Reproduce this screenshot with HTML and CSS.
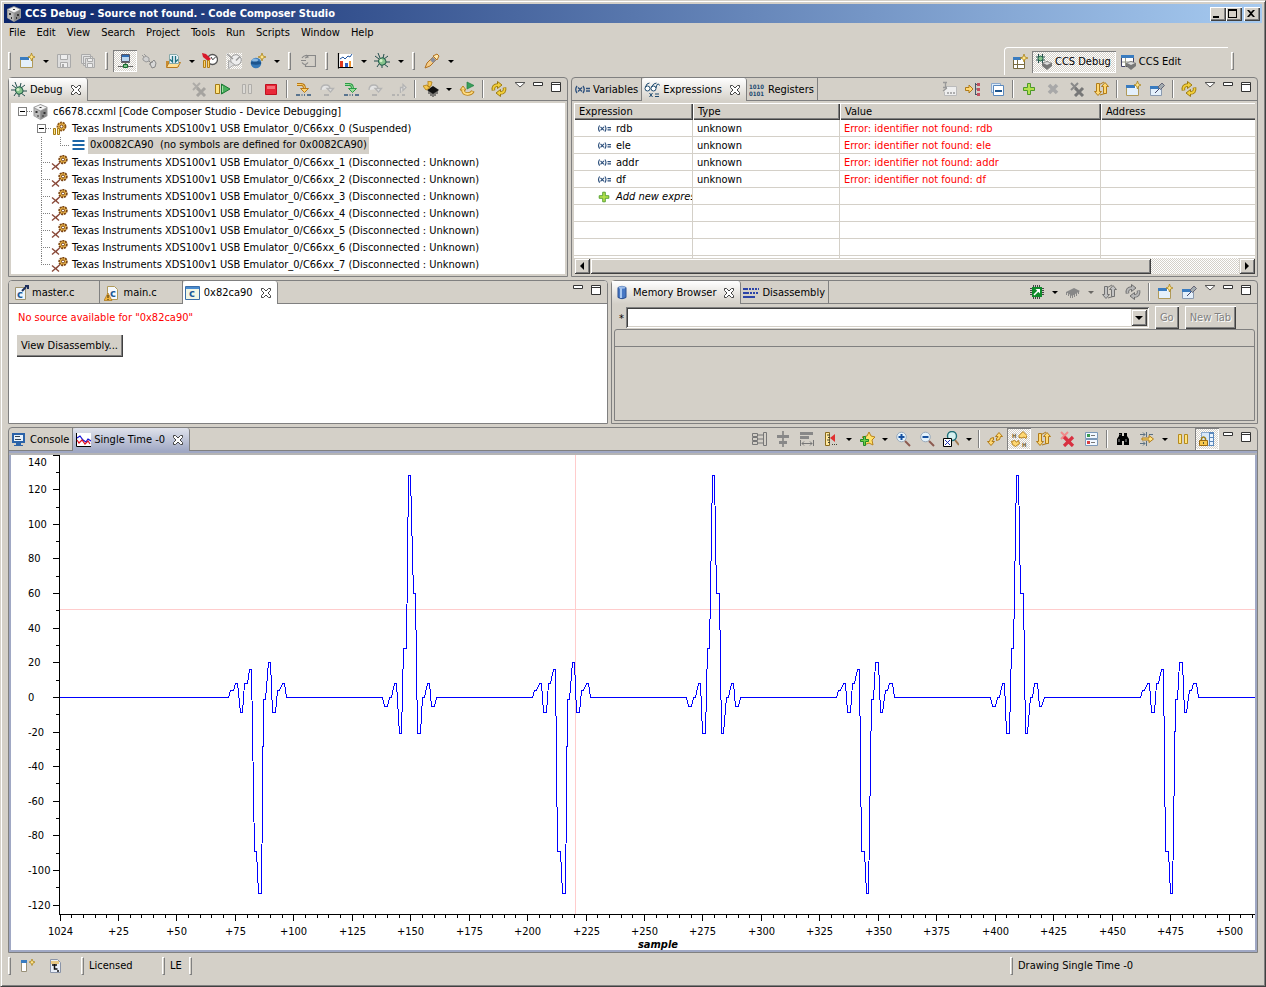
FILE: index.html
```html
<!DOCTYPE html>
<html lang="en">
<head>
  <meta charset="UTF-8">
  <meta name="viewport" content="width=device-width, initial-scale=1.0">
  <title>CCS Debug - Source not found. - Code Composer Studio</title>
  <link rel="stylesheet" href="styles.css">
</head>
<body>

  <!-- icon set -->
  <svg class="sprite" aria-hidden="true">
    <symbol id="cube" viewBox="0 0 16 16">
      <path d="M8 0l7 3v9l-7 4-7-4V3z" fill="#999"/>
      <path d="M8 1l6 2.500-6 3-6-3z" fill="#f2f2f2"/>
      <path d="M2 4.500l5.500 3V15L2 12z" fill="#bbb"/>
      <path d="M14 4.500l-5.500 3V15l5.500-3z" fill="#888"/>
      <path d="M7 3h2v1H7zM3 7h2v2H3zM5 11h1v2H5zM11 8h2v2h-2zM10 11h1v2h-1z" fill="#333"/>
    </symbol>
    <symbol id="window-new" viewBox="0 0 16 16">
      <path d="M1.500 4.500h12v10h-12z" fill="#fff" stroke="#b09a5a"/>
      <path d="M1 4h9v3H1z" fill="#3a7cc0"/>
      <path d="M2 7h11v7H2z" fill="#e4f0fb"/>
      <path d="M12.500 0l1 3 2.500 1-2.500 1-1 3-1-3L9 4l2.500-1z" fill="#ffe58a" stroke="#a67c10" stroke-width=".7"/>
    </symbol>
    <symbol id="save" viewBox="0 0 16 16">
      <path d="M1.500 1.500h13v13h-13z" fill="#ddd" stroke="#aaa"/>
      <path d="M4.500 1.500h7v5h-7zM4.500 9.500h7v5h-7z" fill="#eee" stroke="#aaa"/>
      <path d="M6 11h2v3H6z" fill="#aaa"/>
    </symbol>
    <symbol id="save-all" viewBox="0 0 16 16">
      <path d="M1.500 1.500h9v9h-9zM3.500 3.500h9v9h-9z" fill="#e2e2e2" stroke="#aaa"/>
      <path d="M5.500 5.500h9v9h-9z" fill="#ddd" stroke="#aaa"/>
      <path d="M7.500 5.500h5v3h-5zM7.500 10.500h5v4h-5z" fill="#eee" stroke="#aaa"/>
    </symbol>
    <symbol id="target" viewBox="0 0 16 16">
      <path d="M4.500 1.500h8v7h-8z" fill="#bcd7f0" stroke="#556"/>
      <path d="M5 2h7v2H5z" fill="#2f6db5"/>
      <path d="M8 9h1v3H8zM1 13h5v1H1zM11 13h5v1h-5zM4 9h9v1H4z" fill="#666"/>
      <path d="M6.500 11.500h4v3h-4z" fill="#7fc08a" stroke="#156b2c"/>
    </symbol>
    <symbol id="plugs" viewBox="0 0 16 16">
      <path d="M1 2l2 2M3 1l2 2M2 5l3-2 3 2v3l-3 1-3-2z" fill="#d0d0d0" stroke="#999"/>
      <path d="M8 8l2 2M9 11l4-4 2 3-1 4-3 1zM8 11h2M11 8v2" fill="#d8d8d8" stroke="#888"/>
    </symbol>
    <symbol id="load" viewBox="0 0 16 16">
      <path d="M1 8h3l1 1h9v5H1z" fill="#c88c30"/>
      <path d="M1.500 14.500L4 9.500h11.500l-3 5z" fill="#ffdf95" stroke="#b87a20"/>
      <path d="M4.500 1.500h7l2 2v7h-9z" fill="#e8f2f8" stroke="#8aa"/>
      <path d="M7.500 3v6L5 6.500M10.500 3v6L13 6.500" fill="none" stroke="#1d7080" stroke-width="1.300"/>
    </symbol>
    <symbol id="clock" viewBox="0 0 16 16">
      <circle cx="10.500" cy="6.500" r="5" fill="#fff" stroke="#555" stroke-width="1.300"/>
      <path d="M10.500 7l3-3M10.500 6.500L9 4" stroke="#333"/>
      <path d="M0 0l4 1 5 5-3 2-5-4z" fill="#d8192a"/>
      <path d="M1.500 7.500h2v7h-2zM5.500 7.500h2v7h-2z" fill="#ffd36a" stroke="#b17d16"/>
    </symbol>
    <symbol id="clock-off" viewBox="0 0 16 16">
      <circle cx="10" cy="7" r="5.300" fill="#eee" stroke="#999"/>
      <path d="M10 7.500l4-4M1 1l6 5" stroke="#999" stroke-width="1.500"/>
      <path d="M2.500 7.500l6 4-6 4z" fill="#ddd" stroke="#aaa"/>
    </symbol>
    <symbol id="ball" viewBox="0 0 16 16">
      <circle cx="6" cy="10" r="5.300" fill="#3679b8"/>
      <path d="M1 9q5-2 10 0v2q-5 1.500-10 0z" fill="#1d558e"/>
      <ellipse cx="5" cy="7" rx="3" ry="1.500" fill="#86b6e2"/>
      <path d="M12 0l1 3 3 1-3 1-1 3-1-3-3-1 3-1z" fill="#ffe58a" stroke="#a67c10" stroke-width=".7"/>
    </symbol>
    <symbol id="reload-box" viewBox="0 0 16 16">
      <path d="M6 2.500h9.500v11H5.500V12M2 5q3-4 6-1M8 9.500q-3 4-6 0M1 7.500h5M6 2l2 2-3 1" fill="none" stroke="#888" stroke-width="1.200"/>
    </symbol>
    <symbol id="graph" viewBox="0 0 16 16">
      <path d="M1 1h15v14H1z" fill="#fff"/>
      <path d="M1.500 0v15.500M1 14.500h15" stroke="#000" stroke-width="1.200"/>
      <path d="M3 6l3-2 2 2 3-3 2 1 2-3" fill="none" stroke="#1c53a0"/>
      <path d="M3 8h3v6H3z" fill="#e03a20"/><path d="M8 10h3v4H8z" fill="#2c62c8"/><path d="M12 8h2v6h-2z" fill="#f0922c"/>
    </symbol>
    <symbol id="bug" viewBox="0 0 16 16">
      <path d="M1 3l4 3M0 8h5M3 14l2-3M4 0l2 5M10 1L9 5M14 3l-4 3M16 9h-5M14 14l-4-3M8 15v-4" stroke="#234d4d"/>
      <ellipse cx="8" cy="8.500" rx="3.600" ry="3.600" transform="rotate(-30 8 8)" fill="#86c48d" stroke="#235f4a"/>
      <circle cx="7" cy="7.500" r="1.500" fill="#d6f2c8"/>
    </symbol>
    <symbol id="torch" viewBox="0 0 16 16">
      <path d="M1 15l2-5 7-7 3 3-7 7z" fill="#f6cd88" stroke="#b07020"/>
      <path d="M6 7l3 3 3-3-3-3z" fill="#8a8f9e"/>
      <path d="M9 3l4-2 2 2-2 4z" fill="#ffe9ae" stroke="#b07020"/>
    </symbol>
    <symbol id="xx" viewBox="0 0 16 16">
      <path d="M2 2l7 7M9 2L2 9" stroke="#8a8a8a" stroke-width="2"/>
      <path d="M6 7l8 8M14 7l-8 8" stroke="#777" stroke-width="3"/>
    </symbol>
    <symbol id="resume" viewBox="0 0 16 16">
      <path d="M.500 3.500h4v9h-4z" fill="#ffe37e" stroke="#a37a16"/>
      <path d="M6.500 3l8.500 5-8.500 5z" fill="#48b05c" stroke="#1b7734"/>
      <path d="M7.500 5v6" stroke="#a6dda4"/>
    </symbol>
    <symbol id="pause" viewBox="0 0 16 16">
      <path d="M3.500 3.500h3v9h-3zM9.500 3.500h3v9h-3z" fill="#ffe37e" stroke="#b58a1c"/>
    </symbol>
    <symbol id="stop" viewBox="0 0 16 16">
      <path d="M2.500 3.500h11v10h-11z" fill="#e82838" stroke="#c01020"/>
      <path d="M4 5h8v3H4z" fill="#f47078"/>
    </symbol>
    <symbol id="step-in" viewBox="0 0 16 16">
      <path d="M2 3.500h4.500q3 0 3 4.500" fill="none" stroke="#b8791a" stroke-width="3"/>
      <path d="M2 3.500h4.500q3 0 3 4.500" fill="none" stroke="#ffd36a"/>
      <path d="M5.500 7.500h8l-4 4z" fill="#ffd36a" stroke="#b8791a"/>
      <path d="M1 14h4M12 14h4M6.500 14h1M9 14h1" stroke="#31557c" stroke-width="1.600"/>
    </symbol>
    <symbol id="step-in-green" viewBox="0 0 16 16">
      <path d="M2 3.500h4.500q3 0 3 4.500" fill="none" stroke="#2b9c46" stroke-width="3"/>
      <path d="M2 3.500h4.500q3 0 3 4.500" fill="none" stroke="#9adf9a"/>
      <path d="M5.500 7.500h8l-4 4z" fill="#9adf9a" stroke="#2b9c46"/>
      <path d="M1 14h4M12 14h4M6.500 14h1M9 14h1" stroke="#31557c" stroke-width="1.600"/>
    </symbol>
    <symbol id="step-over" viewBox="0 0 16 16">
      <path d="M2 9q0-5 5-5 4 0 4 4M8 7.500h6.500l-3 3.500z" fill="#e4e4e4" stroke="#b4b4b4" stroke-width="1.300"/>
      <path d="M5 14h5" stroke="#aaa" stroke-width="1.600"/>
    </symbol>
    <symbol id="step-out" viewBox="0 0 16 16">
      <path d="M9.500 12V6.500h2.500M12 3.500l3 3-3 3z" fill="#e4e4e4" stroke="#b4b4b4" stroke-width="1.300"/>
      <path d="M1 14h3M6 14h2M11 14h3" stroke="#aaa" stroke-width="1.600"/>
    </symbol>
    <symbol id="chip-reset" viewBox="0 0 16 16">
      <path d="M4 9l6-4 6 4-6 4z" fill="#111"/>
      <path d="M6 10v3M8 11v4M10 12v4M12 11v4M14 10v3" stroke="#222"/>
      <path d="M5 0l4 1-1 4-3 1zM0 5l4-1 3 3-4 2z" fill="#f7c84e" stroke="#ad7b14" stroke-width=".8"/>
    </symbol>
    <symbol id="restart" viewBox="0 0 16 16">
      <path d="M8 1l7 3.500L8 8z" fill="#3aa05c" stroke="#1f7c3e" stroke-width=".7"/>
      <path d="M4 9q0 4 4.500 4 4 0 5.500-3" fill="none" stroke="#b8831c" stroke-width="3.600"/>
      <path d="M1 9l3-4 3 4z" fill="#ffdc80" stroke="#b8831c"/>
      <path d="M4 8.500q0 4.500 4.500 4.500 4 0 5-2.500" fill="none" stroke="#ffdc80" stroke-width="1.800"/>
    </symbol>
    <symbol id="cycle" viewBox="0 0 16 16">
      <path d="M2.500 9.500Q1.500 4 7 4M13.500 6.500Q14.500 12 9 12" fill="none" stroke="#9c7a10" stroke-width="3.600"/>
      <path d="M6.500 .500L11 4 6.500 7.500zM9.500 8.500L5 12l4.500 3.500z" fill="#f2cf3c" stroke="#9c7a10"/>
      <path d="M2.500 9Q1.500 4 7.500 4M13.500 7Q14.500 12 8.500 12" fill="none" stroke="#f2cf3c" stroke-width="1.800"/>
    </symbol>
    <symbol id="swap" viewBox="0 0 16 16">
      <path d="M3.500 2.500h3v8h2L5 14.500 1.500 10.500h2zM10.500 12.500v-7h-2L12 1.500l3.500 4h-2v7z" fill="#ffd873" stroke="#b07b18"/>
      <path d="M6.500 3.500L11 1M7 14l5-1.500" stroke="#b07b18"/>
    </symbol>
    <symbol id="sync" viewBox="0 0 16 16">
      <path d="M8.500 5.500l3.500-4 3.500 4h-2q0 4-4 4v-2.500q1.500 0 1.500-1.500z" fill="#ffd873" stroke="#b07b18"/>
      <path d="M7.500 10.500L4 14.500l-3.500-4h2q0-4 4-4V9Q5 9 5 10.500z" fill="#ffd873" stroke="#b07b18"/>
    </symbol>
    <symbol id="sync-h" viewBox="0 0 16 16">
      <path d="M8 4.500L12 .500l4 4-1 3-2-1.500-2 1-3-.5zM.500 10.500l3-1 2 1.500 2-1.500 1 3-4 3-3-2z" fill="#ffd873" stroke="#b07b18"/>
      <text x="1" y="7" class="glyph" fill="#7d6a3a">H</text>
      <text x="11" y="16" class="glyph" fill="#7d6a3a">H</text>
    </symbol>
    <symbol id="view-menu" viewBox="0 0 16 16">
      <path d="M3 1.500h10L8 6z" fill="#fff" stroke="#555"/>
    </symbol>
    <symbol id="minimize" viewBox="0 0 16 16">
      <path d="M3.500 1.500h9v3h-9z" fill="#fff" stroke="#333"/>
    </symbol>
    <symbol id="maximize" viewBox="0 0 16 16">
      <path d="M3.500 1.500h9v9h-9zM3 3.500h10" fill="#fff" stroke="#333"/>
    </symbol>
    <symbol id="close" viewBox="0 0 12 12">
      <path d="M1.500 1.500h2L6 4l2.500-2.500h2v2L8 6l2.500 2.500v2h-2L6 8l-2.500 2.500h-2v-2L4 6 1.500 3.500z" fill="#fff" stroke="#444"/>
    </symbol>
    <symbol id="gear-pause" viewBox="0 0 17 16">
      <circle cx="10.500" cy="5.500" r="4" fill="#f2bd4c" stroke="#8a5418" stroke-width="1.800" stroke-dasharray="2 .800"/>
      <circle cx="10.500" cy="5.500" r="1.500" fill="#fff" stroke="#6f3a10"/>
      <path d="M2.500 7.500h2v6h-2zM6.500 7.500h2v6h-2z" fill="#ffe37e" stroke="#a37a16"/>
    </symbol>
    <symbol id="gear-x" viewBox="0 0 17 16">
      <circle cx="12" cy="4.500" r="3.800" fill="#f2bd4c" stroke="#7a4414" stroke-width="1.800" stroke-dasharray="2 .800"/>
      <circle cx="12" cy="4.500" r="1.500" fill="#fff" stroke="#6f3a10"/>
      <path d="M1 8.500l7 6M8 8.500l-7 6M5 11.500l4-4" stroke="#8a4a3a" stroke-width="1.400"/>
    </symbol>
    <symbol id="frame" viewBox="0 0 16 16">
      <path d="M2 2h12v2H2zM2 6h12v2H2zM2 10h12v2H2z" fill="#1c66a8"/>
    </symbol>
    <symbol id="var" viewBox="0 0 16 16">
      <path d="M3 4Q.500 7.500 3 11M9 4q2.500 3.500 0 7M4 5.500l4 4M8 5.500l-4 4M12 6.500h4M12 9h4" fill="none" stroke="#2c4f7c" stroke-width="1.300"/>
    </symbol>
    <symbol id="glasses" viewBox="0 0 16 16">
      <circle cx="3.500" cy="6.500" r="2.500" fill="#fff" stroke="#1e4b70"/>
      <circle cx="9.500" cy="6.500" r="2.500" fill="#fff" stroke="#1e4b70"/>
      <path d="M1.500 5q1-4 4-4M7.500 5q2-4 5-4M12 6l1-3.500q2-1.500 2.500 1M5.500 11l3 4M8.500 11l-3 4M11 12h4M11 14.500h4" fill="none" stroke="#1e4b70"/>
    </symbol>
    <symbol id="registers" viewBox="0 0 16 16">
      <text x="0" y="7" class="glyph" fill="#1e4b70">1010</text>
      <text x="0" y="14" class="glyph" fill="#1e4b70">0101</text>
    </symbol>
    <symbol id="plus" viewBox="0 0 16 16">
      <path d="M6.500 2.500h3v4h4v3h-4v4h-3v-4h-4v-3h4z" fill="#b4e04c" stroke="#4c9a28"/>
    </symbol>
    <symbol id="x-off" viewBox="0 0 16 16">
      <path d="M4 4l8 8M12 4l-8 8" stroke="#a8a8a8" stroke-width="3.600"/>
    </symbol>
    <symbol id="type-names" viewBox="0 0 16 16">
      <path d="M5 5.500h10.500v9H3.500V11" fill="#eee" stroke="#bbb"/>
      <path d="M2 1.500h4M4.500 2v5M2 6.500h4M2 10l4-3M6 12h2M9 12h2M12 12h2" stroke="#999" stroke-width="1.300"/>
    </symbol>
    <symbol id="tree-arrow" viewBox="0 0 16 16">
      <path d="M.500 6.500H4V4l4 4-4 4V9.500H.500z" fill="#ffd873" stroke="#b07b18"/>
      <path d="M10.500 2v12M10 3.500h3M10 8h3M10 13.500h3" stroke="#456" fill="none"/>
      <path d="M12 2h3v3h-3zM12 7h3v3h-3zM12 12h3v3h-3z" fill="#c05060"/>
    </symbol>
    <symbol id="collapse" viewBox="0 0 16 16">
      <path d="M2.500 2.500h9v9h-9z" fill="#dcecfb" stroke="#8aa8cc"/>
      <path d="M4.500 4.500h10v10h-10z" fill="#fff" stroke="#5a88bc"/>
      <path d="M6 9h7v2H6z" fill="#1d558e"/>
    </symbol>
    <symbol id="window-pin" viewBox="0 0 16 16">
      <path d="M1.500 5.500h11v9h-11z" fill="#e4f0fb" stroke="#8a9ab0"/>
      <path d="M1 5h9v3H1z" fill="#3a7cc0"/>
      <path d="M6 12l4-4" stroke="#446"/>
      <path d="M9 6l4-4 2.500 2.500-4 4z" fill="#a4acb0" stroke="#667"/>
    </symbol>
    <symbol id="chip-green" viewBox="0 0 16 16">
      <path d="M4.500 1v14M6.500 1v14M8.500 1v14M10.500 1v14M1 4.500h14M1 6.500h14M1 8.500h14M1 10.500h14" stroke="#444"/>
      <path d="M3 3h10v10H3z" fill="#0f8a2a"/>
      <path d="M5 11l5-5" stroke="#fff" stroke-width="1.600"/>
      <path d="M6.500 5H11v4.500z" fill="#fff"/>
    </symbol>
    <symbol id="chip-off" viewBox="0 0 16 16">
      <path d="M1 8l8-4 6 3-8 5z" fill="#888"/>
      <path d="M1.500 8v3M3.500 9v3M5.500 10v4M7.500 10v4M9.500 10v3M11.500 9v3M13.500 7v3" stroke="#888"/>
    </symbol>
    <symbol id="align-cols" viewBox="0 0 16 16">
      <path d="M1.500 2.500h5v3h-5zM1.500 6.500h5v3h-5zM1.500 10.500h5v3h-5zM12.500 1.500h3v13h-3zM7 4h5M7 8h5M7 12h5" fill="none" stroke="#777"/>
    </symbol>
    <symbol id="align-center" viewBox="0 0 16 16">
      <path d="M8 0v16" stroke="#777" stroke-width="1.400"/>
      <path d="M2 4h12v3H2zM4 10h8v3H4z" fill="#888"/>
    </symbol>
    <symbol id="align-width" viewBox="0 0 16 16">
      <path d="M1 1h13v3H1zM1 5h9v3H1z" fill="#888"/>
      <path d="M1.500 9v6M14.500 9v6M3 12.500h10M5 10.500l-2 2 2 2M11 10.500l2 2-2 2" fill="none" stroke="#777"/>
    </symbol>
    <symbol id="ruler" viewBox="0 0 16 16">
      <path d="M2.500 1.500h4v13h-4z" fill="#ffe9a0" stroke="#8a6a1c"/>
      <path d="M4 4h3M5 6.500h2M4 9h3M5 11.500h2M9 13.500h1M11 13.500h1M13 13.500h1" stroke="#443"/>
      <path d="M12 3v8L7 7z" fill="#e03030"/>
    </symbol>
    <symbol id="star-plus" viewBox="0 0 16 16">
      <path d="M10 1l2 4 4 1-3 3 1 5-4-2-5 2 1-5-3-3 5-1z" fill="#ffe06a" stroke="#b8831c"/>
      <path d="M4.500 5.500h2v3h3v2h-3v4h-2v-4h-3v-2h3z" fill="#6cd048" stroke="#1f8a28"/>
    </symbol>
    <symbol id="zoom-in" viewBox="0 0 16 16">
      <path d="M10 10l5 5" stroke="#8c5a50" stroke-width="2"/>
      <circle cx="6.500" cy="6" r="4.800" fill="#e4f2fb" stroke="#9ab"/>
      <path d="M3.500 6h6M6.500 3v6" stroke="#1450a0" stroke-width="2"/>
    </symbol>
    <symbol id="zoom-out" viewBox="0 0 16 16">
      <path d="M10 10l5 5" stroke="#8c5a50" stroke-width="2"/>
      <circle cx="6.500" cy="6" r="4.800" fill="#e4f2fb" stroke="#9ab"/>
      <path d="M3.500 6h6" stroke="#1450a0" stroke-width="2"/>
    </symbol>
    <symbol id="zoom-fit" viewBox="0 0 16 16">
      <path d="M12 9l4 5" stroke="#a07850" stroke-width="2"/>
      <circle cx="9" cy="5" r="4.500" fill="#d4f0f0" stroke="#1f6f78" stroke-width="1.400"/>
      <path d="M.500 7.500h8v8h-8z" fill="#fff" stroke="#000"/>
      <path d="M2 9l5 5M7 9l-5 5" stroke="#2030b0"/>
    </symbol>
    <symbol id="xx-red" viewBox="0 0 16 16">
      <path d="M2 1l7 7M9 1L2 8" stroke="#f08a8a" stroke-width="2"/>
      <path d="M5 6l9 9M14 6l-9 9" stroke="#d83040" stroke-width="3.200"/>
    </symbol>
    <symbol id="props" viewBox="0 0 16 16">
      <path d="M2.500 1.500h12v6h-12zM2.500 8.500h12v6h-12z" fill="#f2f8ff" stroke="#7c98b8"/>
      <path d="M8 4.500h4M8 11.500h4" stroke="#777"/>
      <path d="M4 3h3v3H4z" fill="#3a9a50"/><path d="M4 10h3v3H4z" fill="#d84040"/>
    </symbol>
    <symbol id="find" viewBox="0 0 16 16">
      <path d="M4 2h3v3h2V2h3v3l2 3v6H9v-4H7v4H2V8l2-3z" fill="#000"/>
      <path d="M4 8v3M11 8v3M5 3v1" stroke="#999"/>
    </symbol>
    <symbol id="merge" viewBox="0 0 16 16">
      <path d="M1 3.500h5M10 3.500h4M1 12.500h5M7.500 1v5M7.500 10v5M4 1.500l2 2-2 2M4 10.500l2 2-2 2" fill="none" stroke="#5a7082"/>
      <path d="M3 7h7V4.500L14.500 8 10 11.500V9H3z" fill="#ffe37e" stroke="#b07b18"/>
    </symbol>
    <symbol id="lock-view" viewBox="0 0 16 16">
      <path d="M2.500 1.500h12v13h-12z" fill="#d8e8f8" stroke="#8aa8cc"/>
      <path d="M10 1h5v14h-5z" fill="#5a88bc"/>
      <path d="M11 3h3v3h-3zM11 7h3v3h-3zM11 11h3v3h-3z" fill="#eaf4ff"/>
      <path d="M2.500 9V7.500q2-3 4 0V9" fill="none" stroke="#9c7a10" stroke-width="1.400"/>
      <path d="M.500 9.500h8v5h-8z" fill="#f7c84e" stroke="#9c6a10"/>
      <path d="M4.500 11v2" stroke="#553"/>
    </symbol>
    <symbol id="c-link" viewBox="0 0 16 16">
      <path d="M2.500 2.500h10v12h-10z" fill="#eef5fc" stroke="#a09470"/>
      <text x="4" y="13" class="glyph-c" fill="#1e5a96">c</text>
      <path d="M9 6l4-4M12 1h3v3" stroke="#1d2f5c" stroke-width="2" fill="none"/>
    </symbol>
    <symbol id="c-warn" viewBox="0 0 16 16">
      <path d="M3.500 1.500h7l3 3v10h-10z" fill="#f6f9fd" stroke="#b09a5a"/>
      <text x="6" y="12" class="glyph-c" fill="#1e5a96">c</text>
      <path d="M4 8l4 7.500H0z" fill="#f2b43c" stroke="#a8741c" stroke-width=".7"/>
      <path d="M4 10v3M4 14v1" stroke="#320"/>
    </symbol>
    <symbol id="c-window" viewBox="0 0 16 16">
      <path d="M.500 1.500h14v13H.500z" fill="#f2f6e4" stroke="#3a6ea8"/>
      <path d="M1 2h13v2H1z" fill="#4a8cd0"/>
      <text x="4" y="12" class="glyph-c" fill="#1e5a96">c</text>
    </symbol>
    <symbol id="memory" viewBox="0 0 16 16">
      <path d="M4 2.500q4-2.500 8 0v10q-4 2.500-8 0z" fill="#4878c4" stroke="#2c5090"/>
      <path d="M7 3v10" stroke="#a8c8f0" stroke-width="2"/>
      <ellipse cx="8" cy="2.500" rx="3.500" ry="1.200" fill="#9cbce8"/>
    </symbol>
    <symbol id="disasm" viewBox="0 0 16 16">
      <path d="M0 4h5M0 8h6M0 12h12" stroke="#2c44a8" stroke-width="2"/>
      <path d="M6 4h10M7 8h8" stroke="#2c44a8" stroke-width="2" stroke-dasharray="2 1"/>
    </symbol>
    <symbol id="console" viewBox="0 0 16 16">
      <path d="M2 2h11v8H2z" fill="#e8f2fc" stroke="#2a62a8" stroke-width="2"/>
      <path d="M4 4.500h5M4 7.500h6" stroke="#345"/>
      <path d="M5 11h5v2H5zM3 13h9v1H3z" fill="#2a62a8"/>
    </symbol>
    <symbol id="plot" viewBox="0 0 16 16">
      <path d="M1 1h15v14H1z" fill="#fff"/>
      <path d="M1.500 1v13.500H16" fill="none" stroke="#000"/>
      <path d="M2 6l3-2 3 4 3 2 2-3 3 2" fill="none" stroke="#1010d8" stroke-width="1.200"/>
      <path d="M2 8l2 3 3-3 3 4 3-3 2 3" fill="none" stroke="#e01020" stroke-width="1.200"/>
    </symbol>
    <symbol id="persp-new" viewBox="0 0 16 16">
      <path d="M1.500 3.500h11v11h-11z" fill="#fff" stroke="#776a40"/>
      <path d="M1 3h8v3H1z" fill="#3a7cc0"/>
      <path d="M5.500 6v8M2 10.500h10" stroke="#776a40"/>
      <path d="M12 0l1 3 3 1-3 1-1 3-1-3-3-1 3-1z" fill="#ffe58a" stroke="#a67c10" stroke-width=".7"/>
    </symbol>
    <symbol id="persp-debug" viewBox="0 0 16 16">
      <path d="M0 3h9M0 6h9M2.500 0v9M6.500 0v9" stroke="#234d4d"/>
      <circle cx="4.500" cy="4.500" r="2.500" fill="#86c48d" stroke="#235f4a"/>
      <path d="M6 9l5-2 5 2v3l-5 4-5-4z" fill="#777"/><path d="M7 9l4-1 4 1-4 2z" fill="#ddd"/>
    </symbol>
    <symbol id="persp-edit" viewBox="0 0 16 16">
      <path d="M1.500 1.500h12v11h-12z" fill="#fff" stroke="#446"/>
      <path d="M1 1h13v3H1z" fill="#3a7cc0"/><path d="M5.500 4v9M2 8h11" stroke="#998"/>
      <path d="M6 9l5-2 5 2v3l-5 4-5-4z" fill="#777"/><path d="M7 9l4-1 4 1-4 2z" fill="#ddd"/>
    </symbol>
    <symbol id="fast-view" viewBox="0 0 16 16">
      <path d="M2.500 2.500h5v11h-5z" fill="#fff" stroke="#999078"/><path d="M2 2h6v3H2z" fill="#3a7cc0"/>
      <path d="M13 1l1 2.500 2 .5-2 1-1 2.500L12 5l-2-1 2-.5z" fill="#ffe58a" stroke="#a67c10" stroke-width=".7"/>
    </symbol>
    <symbol id="ti-file" viewBox="0 0 16 16">
      <path d="M3.500 1.500h7l3 3v10h-10z" fill="#e8eef8" stroke="#8a94a8"/>
      <path d="M4 3h8v3H4z" fill="#e8c884"/>
      <path d="M5 7h5M7.500 6v5h3M11 12v2" stroke="#111" stroke-width="1.500" fill="none"/>
    </symbol>
  </svg>

  <header class="title-bar">
    <svg class="icon"><use href="#cube"/></svg>
    <h1>CCS Debug - Source not found. - Code Composer Studio</h1>
    <button class="win-btn" aria-label="Minimize"><svg viewBox="0 0 10 9"><path d="M1 7h6v2H1z"/></svg></button>
    <button class="win-btn" aria-label="Maximize"><svg viewBox="0 0 10 9"><path d="M0 0h9v9H0zM1 2v6h7V2z" fill-rule="evenodd"/></svg></button>
    <button class="win-btn win-close" aria-label="Close"><svg viewBox="0 0 10 9"><path d="M1 1h2l2 2 2-2h2L6 4.500 9 8H7L5 6 3 8H1l3-3.500z"/></svg></button>
  </header>

  <nav class="menu-bar">
    <a href="#">File</a>
    <a href="#">Edit</a>
    <a href="#">View</a>
    <a href="#">Search</a>
    <a href="#">Project</a>
    <a href="#">Tools</a>
    <a href="#">Run</a>
    <a href="#">Scripts</a>
    <a href="#">Window</a>
    <a href="#">Help</a>
  </nav>

  <div class="toolbar">
    <i class="handle first"></i>
    <button class="tool" aria-label="New"><svg class="icon"><use href="#window-new"/></svg></button>
    <button class="drop" aria-label="New menu"></button>
    <button class="tool" aria-label="Save"><svg class="icon"><use href="#save"/></svg></button>
    <button class="tool" aria-label="Save all"><svg class="icon"><use href="#save-all"/></svg></button>
    <i class="handle"></i>
    <button class="tool pressed" aria-label="Connect target"><svg class="icon"><use href="#target"/></svg></button>
    <button class="tool" aria-label="Disconnect"><svg class="icon"><use href="#plugs"/></svg></button>
    <button class="tool" aria-label="Load program"><svg class="icon"><use href="#load"/></svg></button>
    <button class="drop" aria-label="Load menu"></button>
    <button class="tool" aria-label="Clock"><svg class="icon"><use href="#clock"/></svg></button>
    <button class="tool dither" aria-label="Clock run"><svg class="icon"><use href="#clock-off"/></svg></button>
    <button class="tool" aria-label="New breakpoint"><svg class="icon"><use href="#ball"/></svg></button>
    <button class="drop" aria-label="Breakpoint menu"></button>
    <i class="handle"></i>
    <button class="tool" aria-label="Reload"><svg class="icon"><use href="#reload-box"/></svg></button>
    <i class="handle"></i>
    <button class="tool" aria-label="Graph"><svg class="icon"><use href="#graph"/></svg></button>
    <button class="drop" aria-label="Graph menu"></button>
    <button class="tool" aria-label="Debug"><svg class="icon"><use href="#bug"/></svg></button>
    <button class="drop" aria-label="Debug menu"></button>
    <i class="handle"></i>
    <button class="tool" aria-label="Search"><svg class="icon"><use href="#torch"/></svg></button>
    <button class="drop" aria-label="Search menu"></button>

    <div class="perspectives">
      <button class="tool" aria-label="Open perspective"><svg class="icon"><use href="#persp-new"/></svg></button>
      <button class="persp pressed"><svg class="icon"><use href="#persp-debug"/></svg>CCS Debug</button>
      <button class="persp"><svg class="icon"><use href="#persp-edit"/></svg>CCS Edit</button>
    </div>
    <i class="handle"></i>
  </div>

  <main class="workbench">

    <div class="row row-top">
      <section class="panel">
        <div class="tabs">
          <button class="tab active"><svg class="icon"><use href="#bug"/></svg>Debug<svg class="close"><use href="#close"/></svg></button>
          <div class="tools">
            <button class="tool off" aria-label="Remove all"><svg class="icon"><use href="#xx"/></svg></button>
            <button class="tool" aria-label="Resume"><svg class="icon"><use href="#resume"/></svg></button>
            <button class="tool gray off" aria-label="Suspend"><svg class="icon"><use href="#pause"/></svg></button>
            <button class="tool" aria-label="Terminate"><svg class="icon"><use href="#stop"/></svg></button>
            <i class="sep"></i>
            <button class="tool" aria-label="Step into"><svg class="icon"><use href="#step-in"/></svg></button>
            <button class="tool" aria-label="Step over"><svg class="icon"><use href="#step-over"/></svg></button>
            <button class="tool" aria-label="Assembly step into"><svg class="icon"><use href="#step-in-green"/></svg></button>
            <button class="tool" aria-label="Assembly step over"><svg class="icon"><use href="#step-over"/></svg></button>
            <button class="tool" aria-label="Step return"><svg class="icon"><use href="#step-out"/></svg></button>
            <i class="sep"></i>
            <button class="tool" aria-label="Reset CPU"><svg class="icon"><use href="#chip-reset"/></svg></button>
            <button class="drop" aria-label="Reset menu"></button>
            <button class="tool" aria-label="Restart"><svg class="icon"><use href="#restart"/></svg></button>
            <i class="sep"></i>
            <button class="tool" aria-label="Refresh"><svg class="icon"><use href="#cycle"/></svg></button>
            <button class="chrome" aria-label="View menu"><svg class="icon"><use href="#view-menu"/></svg></button>
            <button class="chrome" aria-label="Minimize"><svg class="icon"><use href="#minimize"/></svg></button>
            <button class="chrome" aria-label="Maximize"><svg class="icon"><use href="#maximize"/></svg></button>
          </div>
        </div>
        <ul class="tree">
          <li class="lvl1"><button class="expander" aria-label="Collapse"></button><i class="stub"></i><svg class="icon"><use href="#cube"/></svg><span>c6678.ccxml [Code Composer Studio - Device Debugging]</span></li>
          <li class="lvl2"><button class="expander" aria-label="Collapse"></button><i class="stub"></i><svg class="icon"><use href="#gear-pause"/></svg><span>Texas Instruments XDS100v1 USB Emulator_0/C66xx_0 (Suspended)</span></li>
          <li class="lvl3"><i class="trunk"></i><i class="elbow"></i><svg class="icon"><use href="#frame"/></svg><span class="selected">0x0082CA90&nbsp; (no symbols are defined for 0x0082CA90)</span></li>
          <li class="leaf"><i class="tee"></i><svg class="icon"><use href="#gear-x"/></svg><span>Texas Instruments XDS100v1 USB Emulator_0/C66xx_1 (Disconnected : Unknown)</span></li>
          <li class="leaf"><i class="tee"></i><svg class="icon"><use href="#gear-x"/></svg><span>Texas Instruments XDS100v1 USB Emulator_0/C66xx_2 (Disconnected : Unknown)</span></li>
          <li class="leaf"><i class="tee"></i><svg class="icon"><use href="#gear-x"/></svg><span>Texas Instruments XDS100v1 USB Emulator_0/C66xx_3 (Disconnected : Unknown)</span></li>
          <li class="leaf"><i class="tee"></i><svg class="icon"><use href="#gear-x"/></svg><span>Texas Instruments XDS100v1 USB Emulator_0/C66xx_4 (Disconnected : Unknown)</span></li>
          <li class="leaf"><i class="tee"></i><svg class="icon"><use href="#gear-x"/></svg><span>Texas Instruments XDS100v1 USB Emulator_0/C66xx_5 (Disconnected : Unknown)</span></li>
          <li class="leaf"><i class="tee"></i><svg class="icon"><use href="#gear-x"/></svg><span>Texas Instruments XDS100v1 USB Emulator_0/C66xx_6 (Disconnected : Unknown)</span></li>
          <li class="leaf"><i class="elbow"></i><svg class="icon"><use href="#gear-x"/></svg><span>Texas Instruments XDS100v1 USB Emulator_0/C66xx_7 (Disconnected : Unknown)</span></li>
        </ul>
      </section>

      <section class="panel">
        <div class="tabs">
          <button class="tab"><svg class="icon"><use href="#var"/></svg>Variables</button>
          <button class="tab active"><svg class="icon"><use href="#glasses"/></svg>Expressions<svg class="close"><use href="#close"/></svg></button>
          <button class="tab"><svg class="icon"><use href="#registers"/></svg>Registers</button>
          <div class="tools">
            <button class="tool" aria-label="Show type names"><svg class="icon"><use href="#type-names"/></svg></button>
            <button class="tool" aria-label="Show logical structure"><svg class="icon"><use href="#tree-arrow"/></svg></button>
            <button class="tool" aria-label="Collapse all"><svg class="icon"><use href="#collapse"/></svg></button>
            <i class="sep"></i>
            <button class="tool" aria-label="Add"><svg class="icon"><use href="#plus"/></svg></button>
            <button class="tool" aria-label="Remove"><svg class="icon"><use href="#x-off"/></svg></button>
            <button class="tool" aria-label="Remove all"><svg class="icon"><use href="#xx"/></svg></button>
            <button class="tool" aria-label="Swap"><svg class="icon"><use href="#swap"/></svg></button>
            <i class="sep"></i>
            <button class="tool" aria-label="New view"><svg class="icon"><use href="#window-new"/></svg></button>
            <button class="tool" aria-label="Pin"><svg class="icon"><use href="#window-pin"/></svg></button>
            <i class="sep"></i>
            <button class="tool" aria-label="Refresh"><svg class="icon"><use href="#cycle"/></svg></button>
            <button class="chrome" aria-label="View menu"><svg class="icon"><use href="#view-menu"/></svg></button>
            <button class="chrome" aria-label="Minimize"><svg class="icon"><use href="#minimize"/></svg></button>
            <button class="chrome" aria-label="Maximize"><svg class="icon"><use href="#maximize"/></svg></button>
          </div>
        </div>
        <div class="grid-view">
          <div class="grid-scroll">
            <table>
              <colgroup><col class="c-expr"><col class="c-type"><col class="c-value"><col></colgroup>
              <thead>
                <tr><th>Expression</th><th>Type</th><th>Value</th><th>Address</th></tr>
              </thead>
              <tbody>
                <tr><td><svg class="icon"><use href="#var"/></svg>rdb</td><td>unknown</td><td class="error">Error: identifier not found: rdb</td><td></td></tr>
                <tr><td><svg class="icon"><use href="#var"/></svg>ele</td><td>unknown</td><td class="error">Error: identifier not found: ele</td><td></td></tr>
                <tr><td><svg class="icon"><use href="#var"/></svg>addr</td><td>unknown</td><td class="error">Error: identifier not found: addr</td><td></td></tr>
                <tr><td><svg class="icon"><use href="#var"/></svg>df</td><td>unknown</td><td class="error">Error: identifier not found: df</td><td></td></tr>
                <tr><td><svg class="icon"><use href="#plus"/></svg><em>Add new expression</em></td><td></td><td></td><td></td></tr>
                <tr><td></td><td></td><td></td><td></td></tr>
                <tr><td></td><td></td><td></td><td></td></tr>
                <tr><td></td><td></td><td></td><td></td></tr>
                <tr><td></td><td></td><td></td><td></td></tr>
              </tbody>
            </table>
          </div>
          <div class="scrollbar">
            <button class="left" aria-label="Scroll left"></button>
            <div class="thumb"></div>
            <div class="track"></div>
            <button class="right" aria-label="Scroll right"></button>
          </div>
        </div>
      </section>
    </div>

    <div class="row row-middle">
      <section class="panel editor">
        <div class="tabs">
          <button class="tab wide"><svg class="icon"><use href="#c-link"/></svg>master.c</button>
          <button class="tab wide"><svg class="icon"><use href="#c-warn"/></svg>main.c</button>
          <button class="tab active"><svg class="icon"><use href="#c-window"/></svg>0x82ca90<svg class="close"><use href="#close"/></svg></button>
          <div class="tools">
            <button class="chrome" aria-label="Minimize"><svg class="icon"><use href="#minimize"/></svg></button>
            <button class="chrome" aria-label="Maximize"><svg class="icon"><use href="#maximize"/></svg></button>
          </div>
        </div>
        <div class="editor-body">
          <p class="error">No source available for "0x82ca90"</p>
          <button class="btn">View Disassembly...</button>
        </div>
      </section>

      <section class="panel">
        <div class="tabs">
          <button class="tab active"><svg class="icon"><use href="#memory"/></svg>Memory Browser<svg class="close"><use href="#close"/></svg></button>
          <button class="tab"><svg class="icon"><use href="#disasm"/></svg>Disassembly</button>
          <div class="tools">
            <button class="tool" aria-label="Go to target"><svg class="icon"><use href="#chip-green"/></svg></button>
            <button class="drop" aria-label="Target menu"></button>
            <button class="tool" aria-label="Memory"><svg class="icon"><use href="#chip-off"/></svg></button>
            <button class="drop off" aria-label="Memory menu"></button>
            <button class="tool flat" aria-label="Swap"><svg class="icon"><use href="#swap"/></svg></button>
            <button class="tool flat" aria-label="Refresh"><svg class="icon"><use href="#cycle"/></svg></button>
            <i class="sep"></i>
            <button class="tool" aria-label="New view"><svg class="icon"><use href="#window-new"/></svg></button>
            <button class="tool" aria-label="Pin"><svg class="icon"><use href="#window-pin"/></svg></button>
            <button class="chrome" aria-label="View menu"><svg class="icon"><use href="#view-menu"/></svg></button>
            <button class="chrome" aria-label="Minimize"><svg class="icon"><use href="#minimize"/></svg></button>
            <button class="chrome" aria-label="Maximize"><svg class="icon"><use href="#maximize"/></svg></button>
          </div>
        </div>
        <div class="memory">
          <div class="address">
            <label for="address">*</label>
            <div class="combo">
              <input type="text" id="address">
              <button aria-label="History"></button>
            </div>
            <button class="btn" disabled>Go</button>
            <button class="btn" disabled>New Tab</button>
          </div>
          <div class="memory-view">
            <div class="memory-tabs"></div>
          </div>
        </div>
      </section>
    </div>

    <section class="panel graph-panel">
      <div class="tabs">
        <button class="tab"><svg class="icon"><use href="#console"/></svg>Console</button>
        <button class="tab active"><svg class="icon"><use href="#plot"/></svg>Single Time -0<svg class="close"><use href="#close"/></svg></button>
        <div class="tools">
          <button class="tool" aria-label="Columns"><svg class="icon"><use href="#align-cols"/></svg></button>
          <button class="tool" aria-label="Center"><svg class="icon"><use href="#align-center"/></svg></button>
          <button class="tool" aria-label="Fit width"><svg class="icon"><use href="#align-width"/></svg></button>
          <button class="tool" aria-label="Measure"><svg class="icon"><use href="#ruler"/></svg></button>
          <button class="drop" aria-label="Measure menu"></button>
          <button class="tool" aria-label="Add marker"><svg class="icon"><use href="#star-plus"/></svg></button>
          <button class="drop" aria-label="Marker menu"></button>
          <button class="tool" aria-label="Zoom in"><svg class="icon"><use href="#zoom-in"/></svg></button>
          <button class="tool" aria-label="Zoom out"><svg class="icon"><use href="#zoom-out"/></svg></button>
          <button class="tool" aria-label="Reset zoom"><svg class="icon"><use href="#zoom-fit"/></svg></button>
          <button class="drop" aria-label="Zoom menu"></button>
          <i class="sep"></i>
          <button class="tool" aria-label="Refresh"><svg class="icon"><use href="#sync"/></svg></button>
          <button class="tool pressed" aria-label="Refresh on halt"><svg class="icon"><use href="#sync-h"/></svg></button>
          <button class="tool" aria-label="Continuous refresh"><svg class="icon"><use href="#swap"/></svg></button>
          <button class="tool" aria-label="Clear"><svg class="icon"><use href="#xx-red"/></svg></button>
          <button class="tool" aria-label="Properties"><svg class="icon"><use href="#props"/></svg></button>
          <i class="sep"></i>
          <button class="tool" aria-label="Find"><svg class="icon"><use href="#find"/></svg></button>
          <button class="tool" aria-label="Go to"><svg class="icon"><use href="#merge"/></svg></button>
          <button class="drop" aria-label="Go to menu"></button>
          <button class="tool" aria-label="Pause"><svg class="icon"><use href="#pause"/></svg></button>
          <button class="tool pressed" aria-label="Lock"><svg class="icon"><use href="#lock-view"/></svg></button>
          <button class="chrome" aria-label="Minimize"><svg class="icon"><use href="#minimize"/></svg></button>
          <button class="chrome" aria-label="Maximize"><svg class="icon"><use href="#maximize"/></svg></button>
        </div>
      </div>
      <div class="graph-body">
        <svg id="graph-plot" class="plot" viewBox="0 0 1244 495" role="img" aria-label="Single Time -0"></svg>
      </div>
    </section>

  </main>

  <footer class="status-bar">
    <i class="handle first"></i>
    <button class="tool" aria-label="Fast view"><svg class="icon"><use href="#fast-view"/></svg></button>
    <svg class="icon ti"><use href="#ti-file"/></svg>
    <i class="handle"></i>
    <span class="license">Licensed</span>
    <i class="handle"></i>
    <span class="endian">LE</span>
    <i class="handle"></i>
    <div class="progress"><i class="handle"></i><span>Drawing Single Time -0</span></div>
  </footer>

  <script>
    const SVG_NS = 'http://www.w3.org/2000/svg';
    const $plot = document.getElementById('graph-plot');

    // plot area
    const LEFT = 49;
    const BOTTOM = 459;
    const WIDTH = 1244;
    const toX = sample => Math.floor(LEFT + sample * 2.338) + 0.5;
    const toY = value => Math.floor(242.42 - value * 1.731) + 0.5;

    const draw = (tag, attrs, text) => {
      const $el = document.createElementNS(SVG_NS, tag);
      Object.entries(attrs).forEach(([key, value]) => $el.setAttribute(key, value));
      if (text !== undefined) $el.textContent = text;
      $plot.appendChild($el);
    };

    // cross hair
    draw('path', { class: 'cross', d: `M${LEFT} 154.5H${WIDTH}M564.5 0V${BOTTOM}` });

    // y axis
    let yAxis = `M48.5 0V${BOTTOM + 1}`;
    for (let value = -120; value <= 140; value += 10) {
      const major = value % 20 === 0;
      yAxis += `M${major ? 42 : 45} ${toY(value)}H48`;
      if (major) {
        draw('text', { x: 17, y: Math.max(toY(value) + 3.5, 11) }, value);
      }
    }
    draw('path', { class: 'axis', d: yAxis });

    // x axis
    let xAxis = `M${LEFT} ${BOTTOM + 0.5}H${WIDTH}`;
    for (let sample = 0; sample <= 510; sample += 5) {
      const major = sample % 25 === 0;
      xAxis += `M${toX(sample)} ${BOTTOM}v${major ? 7 : 4}`;
      if (major) {
        draw('text', { class: 'x-label', x: toX(sample), y: 480 }, sample === 0 ? '1024' : `+${sample}`);
      }
    }
    draw('path', { class: 'axis', d: xAxis });
    draw('text', { class: 'x-title', x: 647, y: 493 }, 'sample');

    // both pulses repeat every 130 samples
    const negative = [0, 4, 4, 8, 8, -9, -9, 8, 8, 16, 16, -89, -89, -113, -113,
      -1, -1, 20, 20, -9, -9, 4, 4, 8, 8, 0];
    const positive = [0, -5, -5, 0, 0, 8, 8, -21, -21, 28, 28, 128, 128, 60, 60,
      -21, -21, 0, 0, 8, 8, -5, -5, 0];

    const points = [];
    for (let start = 0; start < 500; start += 130) {
      negative.forEach((value, i) => points.push([start + 72 + i, value]));
      positive.forEach((value, i) => points.push([start + 138 + i, value]));
    }
    const line = points
      .filter(([sample]) => sample < 500)
      .map(([sample, value]) => `L${toX(sample)} ${toY(value)}`)
      .join('');
    draw('path', { class: 'signal', d: `M${LEFT} ${toY(0)}${line}H${WIDTH}` });
  </script>

</body>
</html>
```

FILE: styles.css
```css
* {
  box-sizing: border-box;
  margin: 0;
  padding: 0;
}
:root {
  --face: #d4d0c8;
  --shadow: #808080;
  --dark: #404040;
  --dither: conic-gradient(#fff 25%, #d4d0c8 0 50%, #fff 0 75%, #d4d0c8 0) 0 0 / 2px 2px;
}
body {
  min-height: 100vh;
  display: flex;
  flex-direction: column;
  padding: 3px;
  background: var(--face);
  border: 1px solid;
  border-color: var(--face) var(--dark) var(--dark) var(--face);
  box-shadow: inset 1px 1px #fff, inset -1px -1px var(--shadow);
  font-family: Tahoma, "DejaVu Sans Condensed", "DejaVu Sans", sans-serif;
  font-size: 11px;
  line-height: 14px;
  color: #000;
}
button,
input {
  font: inherit;
  color: inherit;
}
button {
  background: none;
  border: 0;
}
.sprite {
  display: none;
}
.icon {
  width: 16px;
  height: 16px;
  flex: none;
  display: block;
}
.glyph {
  font: bold 6px "DejaVu Sans Condensed", sans-serif;
}
.glyph-c {
  font: bold 10px "DejaVu Sans", sans-serif;
}
.error {
  color: #f00;
}

/* title bar */
.title-bar {
  display: flex;
  align-items: center;
  height: 19px;
  padding: 0 2px;
  background: linear-gradient(to right, #0a246a, #a6caf0);
  color: #fff;
}
.title-bar h1 {
  flex: 1;
  margin-left: 3px;
  font-size: 11px;
  font-weight: bold;
}
.win-btn {
  width: 16px;
  height: 14px;
  padding: 1px 2px;
  background: var(--face);
  box-shadow: inset 1px 1px #fff, inset -1px -1px var(--dark), inset -2px -2px var(--shadow);
}
.win-btn svg {
  display: block;
  width: 10px;
  height: 9px;
}
.win-close {
  margin-left: 2px;
}

/* menu */
.menu-bar {
  display: flex;
  align-items: center;
  height: 20px;
}
.menu-bar a {
  padding: 0 6px 0 5px;
  color: #000;
  text-decoration: none;
}

/* tool bars */
.toolbar {
  display: flex;
  align-items: center;
  height: 32px;
  margin: 2px 4px 0;
}
.tool {
  display: flex;
  align-items: center;
  justify-content: center;
  width: 24px;
  height: 22px;
}
.pressed {
  background: var(--dither);
  box-shadow: inset 1px 1px var(--shadow), inset -1px -1px #fff;
}
.dither .icon {
  background: var(--dither);
}
.off {
  opacity: 0.5;
}
.gray {
  filter: grayscale(1);
}
.flat {
  filter: grayscale(1) brightness(0.9);
}
.drop {
  width: 13px;
  height: 22px;
  display: flex;
  align-items: center;
  justify-content: center;
}
.drop::before {
  content: "";
  border: 3px solid transparent;
  border-top-color: #000;
  border-bottom: 0;
}
.tabs .drop {
  width: 12px;
}
.handle {
  width: 3px;
  height: 18px;
  margin: 0 5px;
  border: 1px solid;
  border-color: #fff var(--shadow) var(--shadow) #fff;
}
.handle.first {
  margin: 0 4px 0 0;
}
.sep {
  width: 2px;
  height: 18px;
  margin: 0 3px;
  border-left: 1px solid var(--shadow);
  border-right: 1px solid #fff;
}
.perspectives {
  display: flex;
  align-items: center;
  width: 224px;
  height: 28px;
  margin-left: auto;
  padding-left: 3px;
  border-top: 1px solid #fff;
  border-left: 1px solid #fff;
  border-top-left-radius: 4px;
}
.toolbar .perspectives + .handle {
  margin: 0 24px 0 3px;
}
.persp {
  display: flex;
  align-items: center;
  gap: 3px;
  height: 22px;
  padding: 0 5px 0 4px;
  white-space: nowrap;
}

/* workbench */
.workbench {
  flex: 1;
  display: flex;
  flex-direction: column;
  gap: 3px;
  padding: 0 4px;
}
.row {
  display: grid;
  gap: 3px;
}
.row-top {
  grid-template-columns: 560fr 687fr;
}
.row-middle {
  grid-template-columns: 600fr 647fr;
}
.panel {
  display: flex;
  flex-direction: column;
  min-width: 0;
  border: 1px solid var(--shadow);
  border-radius: 4px 4px 0 0;
}
.tabs {
  display: flex;
  height: 23px;
  border-bottom: 1px solid var(--shadow);
}
.tab {
  display: flex;
  align-items: center;
  gap: 3px;
  padding: 1px 3px 0 2px;
  border-right: 1px solid var(--shadow);
  white-space: nowrap;
}
.tab.wide {
  padding: 1px 25px 0 4px;
}
.tab.active {
  height: 23px;
  padding-right: 5px;
  background: linear-gradient(#fff, var(--face));
  border-radius: 0 3px 0 0;
}
.tab + .tab.active {
  border-radius: 3px 3px 0 0;
}
.close {
  width: 12px;
  height: 12px;
  margin-left: 4px;
}
.tools {
  display: flex;
  align-items: center;
  margin-left: auto;
  padding-right: 2px;
}
.chrome {
  width: 18px;
  padding: 0 1px;
}

/* debug tree */
.tree {
  flex: 1;
  margin: 2px;
  padding-bottom: 1px;
  background: #fff;
  list-style: none;
}
.tree li {
  display: flex;
  align-items: center;
  height: 17px;
  white-space: nowrap;
}
.tree span {
  margin-left: 4px;
}
.tree .icon {
  width: 17px;
}
.lvl1 {
  padding-left: 7px;
}
.lvl2 {
  padding-left: 26px;
}
.lvl3,
.leaf {
  padding-left: 30px;
}
.tree .selected {
  margin-left: 1px;
  padding: 1px 2px 2px;
  background: var(--face);
}
.expander {
  width: 9px;
  height: 9px;
  border: 1px solid var(--shadow);
  background: linear-gradient(#000, #000) center / 5px 1px no-repeat #fff;
}
.stub {
  width: 5px;
  height: 1px;
  background: repeating-linear-gradient(to right, #808080 0 1px, transparent 1px 2px);
}
.trunk,
.tee,
.elbow {
  height: 17px;
  background:
    repeating-linear-gradient(to bottom, #808080 0 1px, transparent 1px 2px) left top / 1px 100% no-repeat,
    repeating-linear-gradient(to right, #808080 0 1px, transparent 1px 2px) left center / 100% 1px no-repeat;
}
.tee,
.elbow {
  width: 10px;
}
.trunk {
  width: 19px;
  background-size: 1px 100%, 0 0;
}
.elbow {
  background-size: 1px 9px, 100% 1px;
}

/* expressions */
.grid-view {
  flex: 1;
  display: flex;
  flex-direction: column;
  min-height: 0;
  margin: 2px;
  background: #fff;
}
.grid-scroll {
  flex: 1 1 0;
  overflow: hidden;
}
.grid-view table {
  width: 100%;
  table-layout: fixed;
  border-spacing: 0;
}
.c-expr {
  width: 119px;
}
.c-type {
  width: 147px;
}
.c-value {
  width: 261px;
}
.grid-view th,
.grid-view td {
  height: 17px;
  overflow: hidden;
  white-space: nowrap;
}
.grid-view th {
  padding: 0 5px;
  background: var(--face);
  box-shadow: inset 0 1px #fff, inset 1px 0 #fff, inset -1px -1px var(--dark), inset -2px -2px var(--shadow);
  font-weight: normal;
  text-align: left;
}
.grid-view th:last-child {
  box-shadow: inset 1px 1px #fff, inset 0 -1px var(--dark), inset 0 -2px var(--shadow);
}
.grid-view td {
  padding: 2px 4px 0;
  border-right: 1px solid var(--face);
  border-bottom: 1px solid var(--face);
}
.grid-view td:first-child {
  padding-left: 22px;
  padding-right: 0;
}
.grid-view td:last-child {
  border-right: 0;
}
.grid-view td .icon {
  display: inline-block;
  height: 14px;
  margin-right: 4px;
  vertical-align: top;
}
.scrollbar {
  display: flex;
  height: 16px;
  background: var(--dither);
}
.scrollbar button,
.thumb,
.combo button {
  background: var(--face);
  box-shadow: inset 1px 1px var(--face), inset -1px -1px var(--dark), inset 2px 2px #fff, inset -2px -2px var(--shadow);
}
.scrollbar button {
  display: flex;
  align-items: center;
  justify-content: center;
  width: 16px;
}
.scrollbar button::before {
  content: "";
  border: 4px solid transparent;
}
.scrollbar .left::before {
  border-right-color: #000;
  border-left: 0;
}
.scrollbar .right::before {
  border-left-color: #000;
  border-right: 0;
}
.thumb {
  flex: 560;
}
.track {
  flex: 88;
}

/* editor */
.btn {
  height: 23px;
  padding: 0 5px;
  background: var(--face);
  box-shadow: inset 1px 1px #fff, inset -1px -1px var(--dark), inset -2px -2px var(--shadow);
}
.btn:disabled {
  color: var(--shadow);
  text-shadow: 1px 1px #fff;
}
.editor {
  background: #fff;
}
.editor .tabs {
  background: var(--face);
  border-radius: 3px 3px 0 0;
}
.editor .tab.active {
  background: #fff;
}
.editor-body {
  padding: 7px;
}
.editor-body p {
  margin: 0 2px 9px;
}

/* memory browser */
.memory {
  padding: 2px;
}
.address {
  display: flex;
  align-items: flex-start;
  height: 23px;
  padding-left: 5px;
}
.address label {
  width: 7px;
  padding-top: 6px;
}
.address .btn {
  margin-left: 6px;
}
.address .btn:last-child {
  margin-right: 19px;
}
.combo {
  flex: 1;
  display: flex;
  height: 21px;
  margin-top: 1px;
  padding: 2px;
  background: #fff;
  box-shadow: inset 1px 1px var(--shadow), inset -1px -1px #fff, inset 2px 2px var(--dark), inset -2px -2px var(--face);
}
.combo input {
  flex: 1;
  min-width: 0;
  border: 0;
  outline: 0;
  background: none;
}
.combo button {
  display: flex;
  align-items: center;
  justify-content: center;
  width: 16px;
}
.combo button::before {
  content: "";
  border: 4px solid transparent;
  border-top-color: #000;
  border-bottom: 0;
}
.memory-view {
  height: 92px;
  border: 1px solid var(--shadow);
  border-radius: 3px 3px 0 0;
}
.memory-tabs {
  height: 17px;
  border-bottom: 1px solid var(--shadow);
}

/* graph */
.graph-panel {
  flex: 1;
}
.graph-panel .tab.active {
  background: linear-gradient(#e0e3ec, #a0a8c4);
}
.graph-body {
  flex: 1;
  padding: 4px 2px 2px;
  background: linear-gradient(#a0a8c4 2px, #b4b4b4 2px 4px, #a0a8c4 4px);
}
.plot {
  display: block;
  width: 100%;
  background: #fff;
}
.plot .x-label,
.plot .x-title {
  text-anchor: middle;
}
.plot .x-title {
  font-weight: bold;
  font-style: italic;
}
.plot path {
  fill: none;
  shape-rendering: crispEdges;
}
.plot .axis {
  stroke: #000;
}
.plot .cross {
  stroke: #fcc;
}
.plot .signal {
  stroke: #00f;
}

/* status bar */
.status-bar {
  display: flex;
  align-items: center;
  height: 26px;
  margin: 0 4px 4px;
}
.status-bar .ti {
  margin: 0 13px 0 8px;
}
.license {
  width: 68px;
}
.endian {
  width: 14px;
}
.progress {
  display: flex;
  align-items: center;
  width: 253px;
  margin-left: auto;
}
```
